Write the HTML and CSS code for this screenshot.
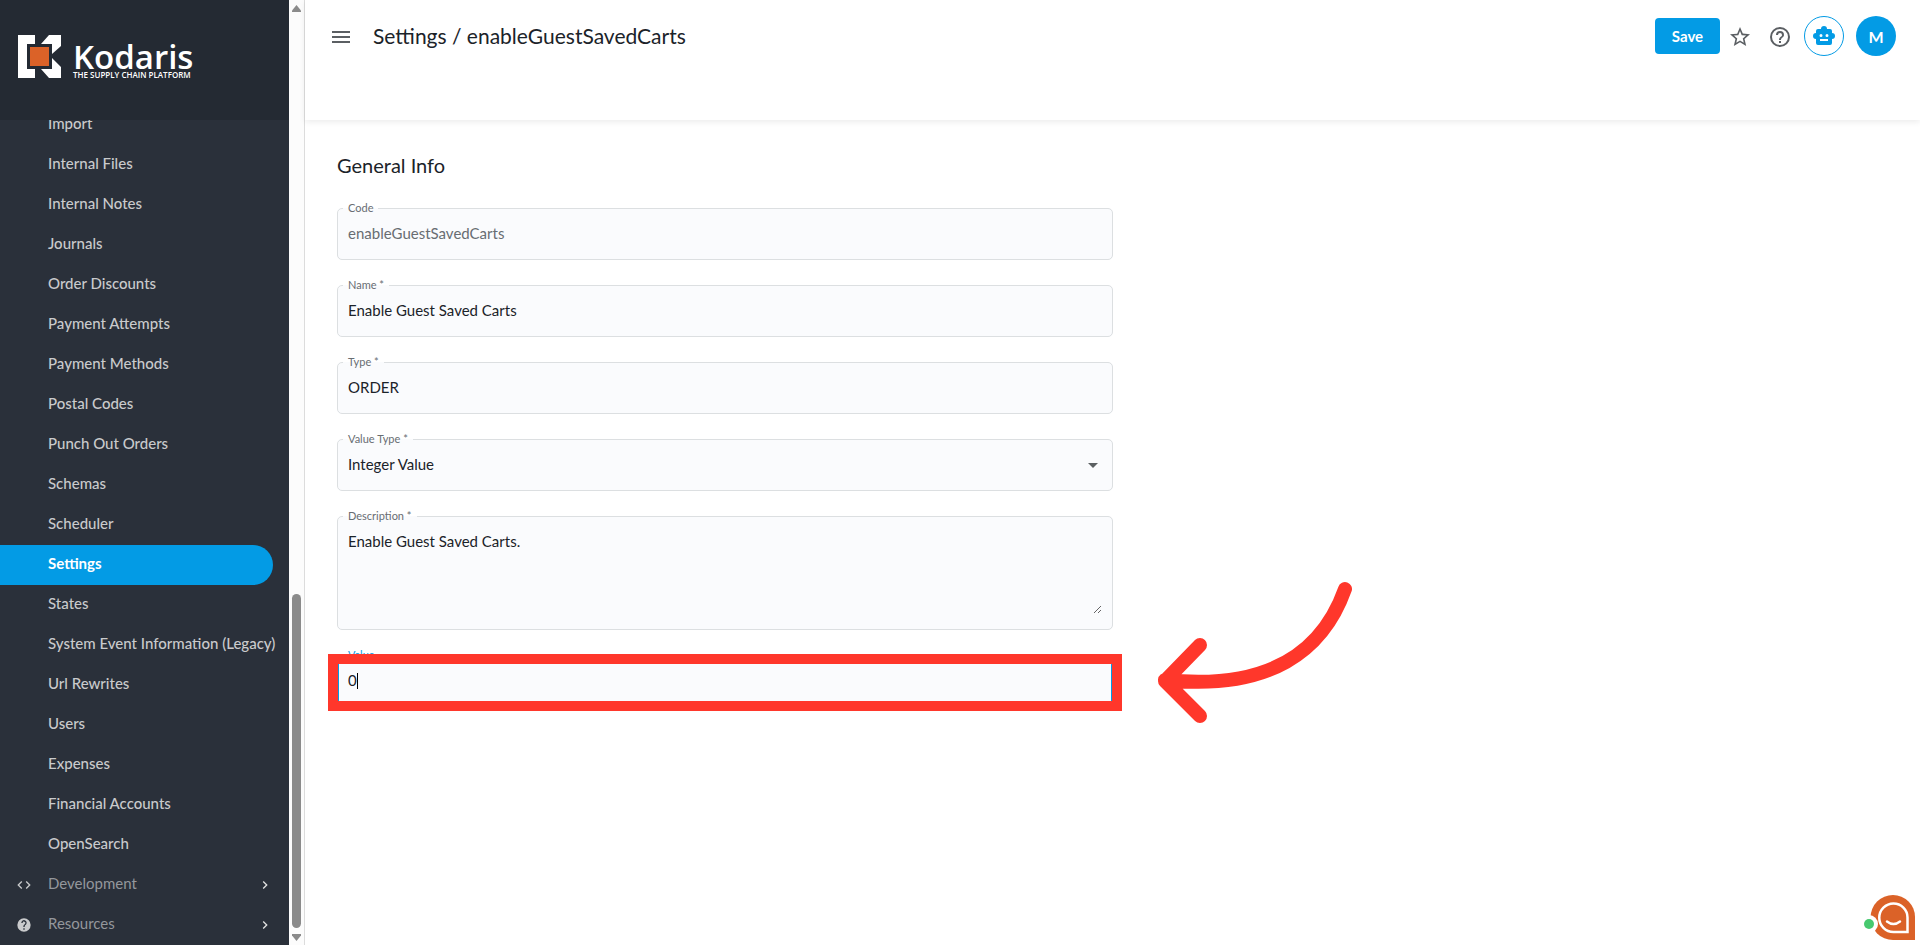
FILE: index.html
```html
<!DOCTYPE html>
<html lang="en">
<head>
<meta charset="utf-8">
<title>Settings / enableGuestSavedCarts</title>
<link rel="stylesheet" href="styles.css">
</head>
<body>
<div class="app">
  <aside class="sidebar">
    <div class="brand">
      <svg class="brand-mark" viewBox="0 0 43 43" aria-hidden="true">
        <path fill="#fff" d="M0 0h17v9H9v25h8v9H0z"/>
        <path fill="#fff" d="M31 0h12v11l-9 8V9H23zM34 23l9 9v11H31l-8-9h11z"/>
        <path fill="#db6228" d="M12 12h19v19H12z"/>
      </svg>
      <div class="brand-text">
        <span class="brand-name">Kodaris</span>
        <span class="brand-tag">THE SUPPLY CHAIN PLATFORM</span>
      </div>
    </div>
    <nav class="nav">
      <a class="nav-item" href="#">Import</a>
      <a class="nav-item" href="#">Internal Files</a>
      <a class="nav-item" href="#">Internal Notes</a>
      <a class="nav-item" href="#">Journals</a>
      <a class="nav-item" href="#">Order Discounts</a>
      <a class="nav-item" href="#">Payment Attempts</a>
      <a class="nav-item" href="#">Payment Methods</a>
      <a class="nav-item" href="#">Postal Codes</a>
      <a class="nav-item" href="#">Punch Out Orders</a>
      <a class="nav-item" href="#">Schemas</a>
      <a class="nav-item" href="#">Scheduler</a>
      <a class="nav-item active" href="#">Settings</a>
      <a class="nav-item" href="#">States</a>
      <a class="nav-item" href="#">System Event Information (Legacy)</a>
      <a class="nav-item" href="#">Url Rewrites</a>
      <a class="nav-item" href="#">Users</a>
      <a class="nav-item" href="#">Expenses</a>
      <a class="nav-item" href="#">Financial Accounts</a>
      <a class="nav-item" href="#">OpenSearch</a>
      <a class="nav-item group" href="#">
        <svg class="group-icon" viewBox="0 0 24 24" aria-hidden="true"><path d="M9.4 16.6 4.8 12l4.6-4.6L8 6l-6 6 6 6zm5.2 0 4.6-4.6-4.6-4.6L16 6l6 6-6 6z"/></svg>
        <span class="group-label">Development</span>
        <svg class="chevron" viewBox="0 0 24 24" aria-hidden="true"><path d="M10 6 8.600 7.400 13.200 12l-4.600 4.600L10 18l6-6z"/></svg>
      </a>
      <a class="nav-item group" href="#">
        <svg class="group-icon" viewBox="0 0 24 24" aria-hidden="true"><path d="M12 2a10 10 0 1 0 0 20 10 10 0 0 0 0-20zm1 17h-2v-2h2zm2.070-7.750-.9.920C13.450 12.900 13 13.500 13 15h-2v-.5c0-1.100.45-2.100 1.170-2.830l1.240-1.260A2 2 0 1 0 10 9H8a4 4 0 1 1 7.070 2.250z"/></svg>
        <span class="group-label">Resources</span>
        <svg class="chevron" viewBox="0 0 24 24" aria-hidden="true"><path d="M10 6 8.600 7.400 13.200 12l-4.600 4.600L10 18l6-6z"/></svg>
      </a>
    </nav>
  </aside>

  <div class="scrollbar" aria-hidden="true">
    <svg class="scroll-arrow" viewBox="0 0 9 7"><path d="M4.500 0 9 5.500V7H0V5.500z"/></svg>
    <div class="scroll-track"><div class="scroll-thumb"></div></div>
    <svg class="scroll-arrow" viewBox="0 0 9 7"><path d="M4.500 7 9 1.500V0H0v1.500z"/></svg>
  </div>

  <main class="main">
    <header class="topbar">
      <button class="icon-btn menu" aria-label="Menu"><svg viewBox="0 0 24 24"><path d="M3 18h18v-2H3zm0-5h18v-2H3zm0-7v2h18V6z"/></svg></button>
      <h1 class="title">Settings / enableGuestSavedCarts</h1>
      <div class="actions">
        <button class="save">Save</button>
        <button class="icon-btn star" aria-label="Favorite"><svg viewBox="0 0 24 24"><path d="m22 9.240-7.190-.62L12 2 9.190 8.630 2 9.240l5.460 4.730L5.820 21 12 17.270 18.180 21l-1.630-7.030zM12 15.400l-3.760 2.270 1-4.280-3.320-2.880 4.380-.38L12 6.100l1.710 4.040 4.380.38-3.320 2.880 1 4.280z"/></svg></button>
        <button class="icon-btn help" aria-label="Help"><svg viewBox="0 0 24 24"><path d="M11 18h2v-2h-2zm1-16a10 10 0 1 0 0 20 10 10 0 0 0 0-20zm0 18a8 8 0 1 1 0-16 8 8 0 0 1 0 16zm0-14a4 4 0 0 0-4 4h2a2 2 0 1 1 4 0c0 2-3 1.750-3 5h2c0-2.250 3-2.500 3-5a4 4 0 0 0-4-4z"/></svg></button>
        <button class="round robot" aria-label="Assistant"><svg viewBox="0 0 24 24"><path d="M20 9V7a2 2 0 0 0-2-2h-3a3 3 0 0 0-6 0H6a2 2 0 0 0-2 2v2a3 3 0 0 0 0 6v4a2 2 0 0 0 2 2h12a2 2 0 0 0 2-2v-4a3 3 0 0 0 0-6zM7.500 11.500a1.500 1.500 0 1 1 3 0 1.500 1.500 0 0 1-3 0zM16 17H8v-2h8zm-1-4a1.500 1.500 0 1 1 0-3 1.500 1.500 0 0 1 0 3z"/></svg></button>
        <button class="round avatar">M</button>
      </div>
    </header>

    <form class="form">
      <h2 class="section">General Info</h2>
      <fieldset class="field">
        <legend><label for="code">Code</label></legend>
        <input id="code" type="text" value="enableGuestSavedCarts" disabled>
      </fieldset>
      <fieldset class="field">
        <legend><label for="name">Name *</label></legend>
        <input id="name" type="text" value="Enable Guest Saved Carts">
      </fieldset>
      <fieldset class="field">
        <legend><label for="type">Type *</label></legend>
        <input id="type" type="text" value="ORDER">
      </fieldset>
      <fieldset class="field">
        <legend><label for="valueType">Value Type *</label></legend>
        <div class="select-row">
          <select id="valueType"><option>Integer Value</option></select>
          <svg class="caret-down" viewBox="0 0 10 5" aria-hidden="true"><path d="M0 0h10L5 5z"/></svg>
        </div>
      </fieldset>
      <fieldset class="field">
        <legend><label for="description">Description *</label></legend>
        <textarea id="description">Enable Guest Saved Carts.</textarea>
      </fieldset>
      <div class="marked">
        <fieldset class="field focused">
          <legend><label for="value">Value</label></legend>
          <input id="value" type="text" value="0">
        </fieldset>
        <span class="text-cursor"></span>
        <div class="highlight"></div>
        <svg class="arrow" viewBox="0 0 196 144" aria-hidden="true"><path d="M187 10C165 72 112 112 7 101M42 66 7 102l35 35"/></svg>
      </div>
    </form>
  </main>

  <button class="chat" aria-label="Chat">
    <svg viewBox="0 0 52 46">
      <path fill="#db6228" d="M29 0a22 22 0 0 1 22 22v23H29A22 22 0 0 1 29 0z"/>
      <path fill="none" stroke="#fff" stroke-width="2.500" d="M29.500 8.500a14 14 0 0 1 14 14v14.500h-14a14 14 0 0 1 0-28.500z"/>
      <path fill="none" stroke="#fff" stroke-width="2.500" stroke-linecap="round" d="M23 26.500q6.500 5 13 0"/>
      <circle cx="5" cy="29" r="9" fill="#fff"/>
      <circle cx="5" cy="29" r="5" fill="#47c96f"/>
    </svg>
  </button>
</div>
</body>
</html>
```
FILE: styles.css
```css
* { box-sizing: border-box; }

body {
  margin: 0;
  font-family: Lato, "Open Sans", sans-serif;
  font-size: 15px;
  color: #1b2329;
  background: #fff;
}

button, input, select, textarea { font: inherit; color: inherit; }
button { border: 0; padding: 0; background: none; cursor: pointer; }
svg { display: block; }

.app { display: flex; height: 100vh; overflow: hidden; }

/* Sidebar */
.sidebar {
  display: flex;
  flex-direction: column;
  flex: 0 0 289px;
  min-width: 0;
  background: #2a303a;
}
.brand {
  display: flex;
  flex: 0 0 120px;
  gap: 12px;
  padding: 35px 18px 0;
  background: #242a33;
  color: #fff;
}
.brand-mark { flex: none; width: 43px; height: 43px; }
.brand-text { display: flex; flex-direction: column; padding-top: 8px; }
.brand-name { font: 600 33px/28px "Open Sans", sans-serif; }
.brand-tag {
  font: 600 8px/8px "Open Sans", sans-serif;
  white-space: nowrap;
}
.nav {
  display: flex;
  flex: 1;
  flex-direction: column;
  justify-content: flex-end;
  min-height: 0;
  overflow: hidden;
}
.nav-item {
  flex: 0 0 40px;
  margin-right: 16px;
  padding-left: 48px;
  line-height: 36px;
  font-weight: 500;
  white-space: nowrap;
  color: #c9cacc;
  text-decoration: none;
}
.nav-item.active {
  background: #039be5;
  border-radius: 0 20px 20px 0;
  color: #fff;
  font-weight: 700;
}
.nav-item.group {
  display: flex;
  align-items: center;
  gap: 16px;
  padding-left: 16px;
  color: #94979c;
  font-weight: 400;
}
.group-icon { width: 16px; height: 16px; fill: #c9cacc; }
.group-label { flex: 1; padding-bottom: 4px; }
.chevron { width: 16px; height: 16px; fill: #e2e2e2; }

.scrollbar {
  display: flex;
  flex: 0 0 16px;
  flex-direction: column;
  align-items: center;
  gap: 6px;
  padding: 5px 0 4px;
  background: #fcfcfc;
  border-right: 1px solid #dcdcdc;
}
.scroll-arrow { width: 9px; height: 7px; fill: #8b8b8b; }
.scroll-track {
  display: flex;
  flex: 1;
  flex-direction: column;
  justify-content: flex-end;
}
.scroll-thumb { width: 9px; height: 334px; border-radius: 5px; background: #8b8b8b; }

/* Top bar */
.main { display: flex; flex: 1; flex-direction: column; min-width: 0; }
.topbar {
  display: flex;
  align-items: flex-start;
  flex: 0 0 120px;
  padding: 16px 24px 0;
  box-shadow: 0 2px 6px rgba(0, 0, 0, 0.08);
}
.icon-btn { display: flex; align-items: center; height: 42px; }
.icon-btn svg { width: 24px; height: 24px; fill: #5b5f63; }
.title {
  flex: 1;
  margin: 0 0 0 20px;
  font-size: 21px;
  font-weight: 400;
  line-height: 40px;
}
.actions { display: flex; }
.save {
  width: 65px;
  height: 36px;
  margin: 2px 8px 0 0;
  border-radius: 4px;
  background: #039be5;
  color: #fff;
  font-weight: 700;
}
.star { margin-right: 16px; }
.help { margin-right: 12px; }
.round {
  display: flex;
  align-items: center;
  justify-content: center;
  width: 40px;
  height: 40px;
  border-radius: 50%;
}
.robot { margin-right: 12px; border: 1px solid #039be5; }
.robot svg { width: 24px; height: 24px; fill: #039be5; }
.avatar { background: #039be5; color: #fff; font-size: 16px; font-weight: 700; }

/* Form */
.form {
  display: flex;
  flex-direction: column;
  gap: 18px;
  width: 50%;
  max-width: 808px;
  padding: 31px 0 0 32px;
}
.section { margin: 0 0 4px; font-size: 20px; font-weight: 400; line-height: 28px; }
.field {
  min-width: 0;
  margin: 0;
  padding: 0 5px 8px;
  border: 1px solid #dcdfe1;
  border-radius: 5px;
  background: #fafbfd;
}
.field legend {
  height: 14px;
  padding: 0 5px;
  font-size: 11px;
  line-height: 14px;
  color: #686d72;
}
.field input, .field select, .field textarea {
  display: block;
  width: 100%;
  height: 36px;
  padding: 8px 5px;
  border: 0;
  outline: 0;
  background: transparent;
  line-height: 20px;
  appearance: none;
}
.field input:disabled { color: #686d72; }
.field textarea { height: 91px; resize: vertical; }
.field:has(textarea) { padding: 0 10px 15px 5px; }
.select-row { position: relative; }
.caret-down {
  position: absolute;
  top: 17px;
  right: 9px;
  width: 10px;
  height: 5px;
  fill: #5b6062;
}

.marked { position: relative; }
.focused { border: 2px solid #039be5; }
.focused legend { padding: 0 4px; color: #039be5; }
.focused input { padding: 8px 4px; }
.text-cursor {
  position: absolute;
  top: 25px;
  left: 20px;
  width: 1px;
  height: 16px;
  background: #000;
}
.highlight {
  position: absolute;
  inset: 6px -9px -3px -9px;
  border: 10px solid #ff372b;
}
.arrow {
  position: absolute;
  top: -69px;
  left: calc(100% + 45px);
  width: 196px;
  height: 144px;
  fill: none;
  stroke: #ff372b;
  stroke-width: 14px;
  stroke-linecap: round;
  stroke-linejoin: round;
}

.chat { position: fixed; right: 4px; bottom: 4px; }
.chat svg { width: 52px; height: 46px; }
```
